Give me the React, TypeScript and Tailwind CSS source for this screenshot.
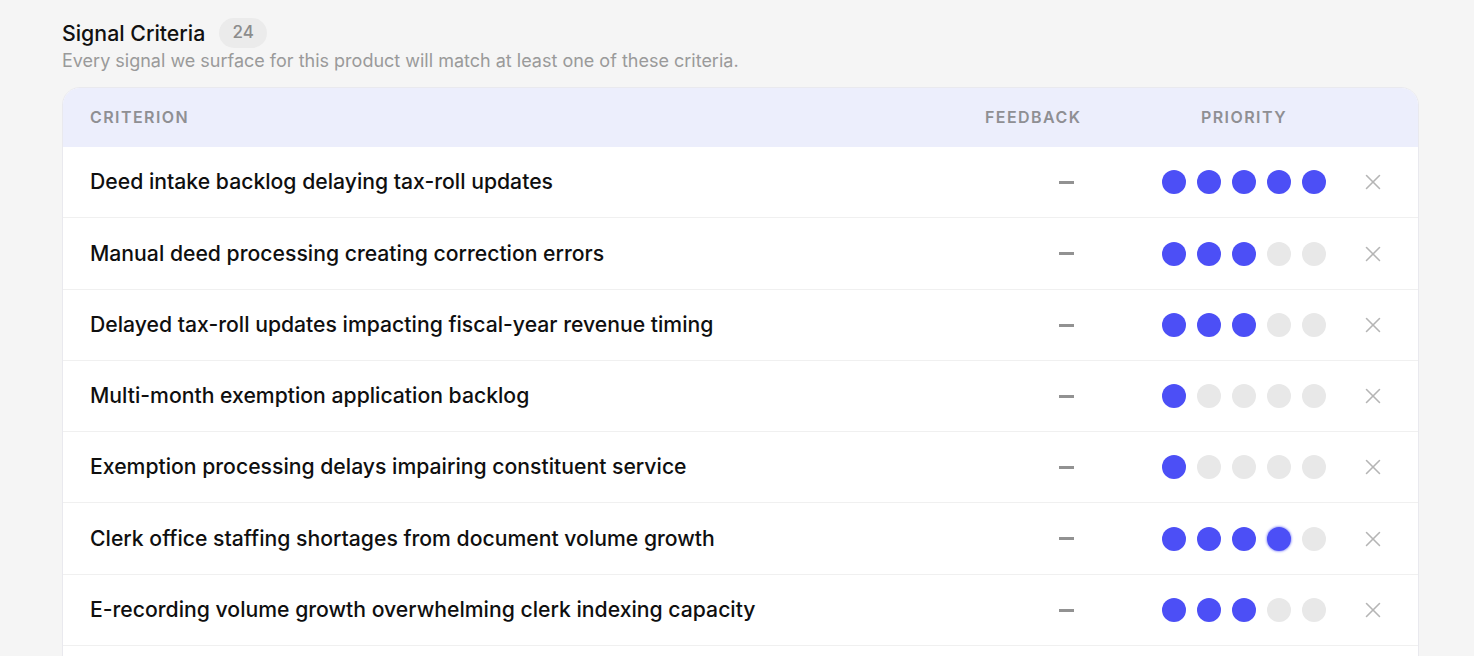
import { X } from "lucide-react";

// criteria list + priority (filled dots out of 5)
const criteria = [
  { label: "Deed intake backlog delaying tax-roll updates", priority: 5, h: "h-[71px]" },
  { label: "Manual deed processing creating correction errors", priority: 3, h: "h-[72px]" },
  { label: "Delayed tax-roll updates impacting fiscal-year revenue timing", priority: 3, h: "h-[71px]" },
  { label: "Multi-month exemption application backlog", priority: 1, h: "h-[71px]" },
  { label: "Exemption processing delays impairing constituent service", priority: 1, h: "h-[71px]" },
  { label: "Clerk office staffing shortages from document volume growth", priority: 4, hover: true, h: "h-[72px]" },
  { label: "E-recording volume growth overwhelming clerk indexing capacity", priority: 3, h: "h-[71px]" },
];

const PriorityDots: React.FC<{ value: number; hover?: boolean }> = ({ value, hover }) => {
  return (
    <div className="flex items-center justify-center gap-[11px]">
      {[1, 2, 3, 4, 5].map((i) => (
        <span
          key={i}
          className={
            i <= value
              ? i === value && hover
                ? "h-6 w-6 rounded-full bg-[#4c4ff6] shadow-[0_0_2px_1px_rgba(76,79,246,0.45)]"
                : "h-6 w-6 rounded-full bg-[#4c4ff6]"
              : "h-6 w-6 rounded-full bg-[#e8e8e8]"
          }
        />
      ))}
    </div>
  );
};

export default function App() {
  return (
    <div
      className="min-h-screen bg-[#f5f5f5] pl-[62px] pr-[55px] pt-[18px]"
      style={{ fontFamily: "'Inter', 'Liberation Sans', sans-serif" }}
    >
      {/* Header */}
      <div className="flex items-center gap-[14px]">
        <h2 className="text-[21.3px] font-medium text-[#111] leading-[30px]">Signal Criteria</h2>
        <span className="flex h-[30px] w-[48px] items-center justify-center rounded-full bg-[#ebebeb] text-[17px] font-medium text-[#8c8c8c]">
          24
        </span>
      </div>
      <p className="mt-[0px] text-[18px] text-[#9a9a9a] leading-[25px]">
        Every signal we surface for this product will match at least one of these criteria.
      </p>

      {/* Table card */}
      <div className="mt-[14px] overflow-hidden rounded-t-[18px] border border-[#e9e9ee] bg-white">
        <div className="grid h-[59px] grid-cols-[1fr_162px_194px_64px] items-center bg-[#eceefc] pl-[27px] pr-[13px] pb-[1px] text-[16px] font-semibold tracking-[0.09em] text-[#8f8f93]">
          <span>CRITERION</span>
          <span>FEEDBACK</span>
          <span className="text-center">PRIORITY</span>
          <span />
        </div>
        {criteria.map((c) => (
          <div
            key={c.label}
            className={`grid ${c.h} grid-cols-[1fr_162px_194px_64px] items-center border-b border-[#f0f0f0] pl-[27px] pr-[13px]`}
          >
            <span className="text-[21.2px] font-medium text-[#0f0f0f]">{c.label}</span>
            <span className="flex justify-center">
              <span className="block h-[3px] w-[15px] bg-[#929292]" />
            </span>
            <PriorityDots value={c.priority} hover={c.hover} />
            <span className="flex justify-center text-[#b5b5b5]">
              <X size={26} strokeWidth={1.4} />
            </span>
          </div>
        ))}
        <div className="h-[40px]" />
      </div>
    </div>
  );
}
